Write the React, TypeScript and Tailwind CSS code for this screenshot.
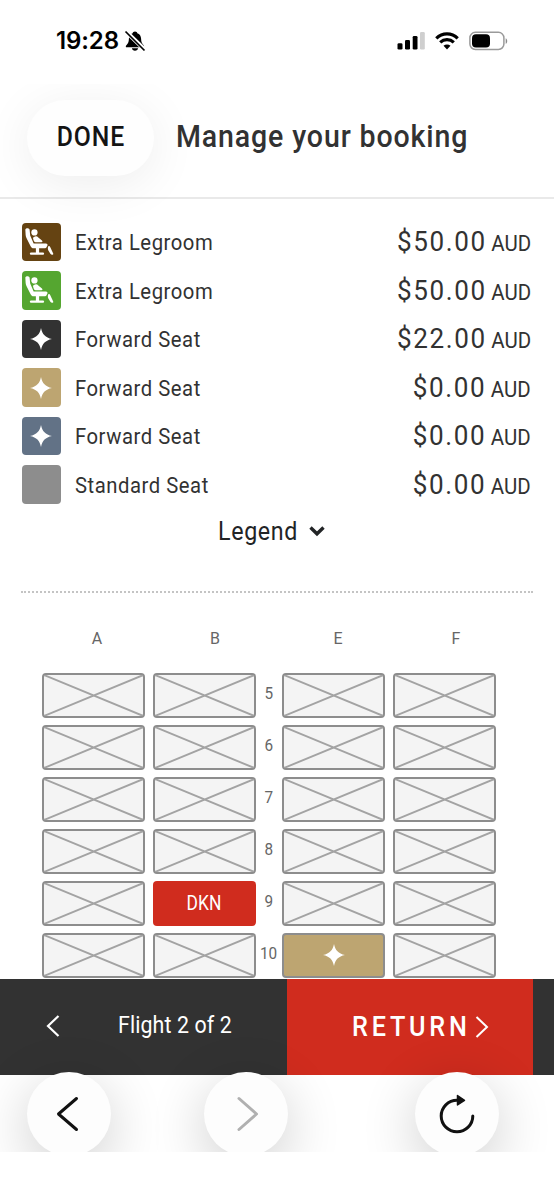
import clsx from 'clsx';
import { ReactNode } from 'react';

type FareIcon = 'legroom' | 'star' | 'none';

interface Fare {
  label: string;
  price: string;
  color: string;
  icon: FareIcon;
}

const FARES: Fare[] = [
  { label: 'Extra Legroom', price: '$50.00', color: 'bg-[#654312]', icon: 'legroom' },
  { label: 'Extra Legroom', price: '$50.00', color: 'bg-[#55a630]', icon: 'legroom' },
  { label: 'Forward Seat', price: '$22.00', color: 'bg-[#323232]', icon: 'star' },
  { label: 'Forward Seat', price: '$0.00', color: 'bg-[#bda571]', icon: 'star' },
  { label: 'Forward Seat', price: '$0.00', color: 'bg-[#627286]', icon: 'star' },
  { label: 'Standard Seat', price: '$0.00', color: 'bg-[#8d8d8d]', icon: 'none' },
];

const ROWS = [5, 6, 7, 8, 9, 10];

const ASSIGNED: Record<string, string> = { '9B': 'DKN' };
const AVAILABLE = ['10E'];

export default function App() {
  return (
    <div className="flex h-[1200px] w-[554px] flex-col overflow-hidden bg-white font-['Roboto',sans-serif] text-[#323232]">
      <StatusBar />
      <header className="flex h-[115px] shrink-0 items-center border-b-2 border-[#e9e9e9] pb-[5px] pl-[27px] [clip-path:inset(0_0_-70px_0)]">
        <button className="flex h-[76px] w-[127px] items-center justify-center rounded-full bg-[#fefefe] text-[27.5px] font-medium text-[#141414] shadow-[0_8px_50px_rgba(0,0,0,0.075)]">
          <span className="scale-x-[0.9] pb-[2px] tracking-[1px] whitespace-nowrap">DONE</span>
        </button>
        <h1 className="ml-[22px] origin-left scale-x-[0.92] pb-px text-[31px] font-medium tracking-[0.95px] whitespace-nowrap">
          Manage your booking
        </h1>
      </header>

      <main className="flex h-[780px] shrink-0 flex-col overflow-hidden pt-[24px]">
        <ul className="flex flex-col gap-[10.5px] pr-[23px] pl-[22px]">
          {FARES.map((fare, i) => (
            <FareRow key={i} fare={fare} />
          ))}
        </ul>

        <button className="mt-[11px] flex h-[34px] items-center pl-[218px] text-[25px] text-[#222426]">
          <span className="w-[80px] origin-left scale-x-[0.93] text-left tracking-[0.7px] whitespace-nowrap">
            Legend
          </span>
          <svg className="mb-[2px] ml-[11px] h-[12px] w-[16px]" viewBox="0 0 16 12" fill="none">
            <path d="M1.500 2.500 8 8.800l6.500-6.300" stroke="currentColor" strokeWidth="3.400" />
          </svg>
        </button>

        <div className="mx-[21px] mt-[42px] border-t-2 border-dotted border-[#c4c4c4]" />

        <SeatMap />
      </main>

      <footer className="flex h-24 shrink-0 bg-[#323232] pr-[21px] text-white">
        <div className="flex flex-1 items-center pb-[2px] pl-[46px]">
          <svg className="h-[24px] w-[14px]" viewBox="0 0 14 24" fill="none">
            <path d="M12.500 2 2 12l10.500 10" stroke="currentColor" strokeWidth="2.200" />
          </svg>
          <span className="ml-[58px] origin-left scale-x-[0.93] text-[23px] tracking-[0.1px] whitespace-nowrap">
            Flight 2 of 2
          </span>
        </div>
        <button className="flex w-[246px] items-center bg-[#d02c1e] pl-[65px]">
          <span className="w-[123px] origin-left scale-x-[0.9] text-left text-[28px] font-medium tracking-[4.2px] whitespace-nowrap">
            RETURN
          </span>
          <svg className="mb-px h-[24px] w-[14px]" viewBox="0 0 14 24" fill="none">
            <path d="m1.500 2 10.500 10L1.500 22" stroke="currentColor" strokeWidth="2" />
          </svg>
        </button>
      </footer>

      <nav className="-mt-[3px] flex h-[80px] shrink-0 pl-[27px] [clip-path:inset(-40px_0_0_0)]">
        <RoundButton className="text-[#111]">
          <path d="M49.500 26.500 31.500 42l18 15.500" />
        </RoundButton>
        <RoundButton className="ml-[93px] text-[#b0b0b0]">
          <path d="m35 26.500 17.500 15.500-17.500 15.500" />
        </RoundButton>
        <RoundButton className="ml-[127px] text-[#111]">
          <path d="M43 28.200h-1a15.800 15.800 0 1 0 15.800 15.800" />
          <path d="M42.500 23.500v9.500l7-4.700z" fill="currentColor" strokeWidth="1.500" />
        </RoundButton>
      </nav>
    </div>
  );
}

function StatusBar() {
  return (
    <div className="flex h-[84px] shrink-0 items-center pb-[2px] pl-[56px] text-black">
      <span className="w-[66px] font-['Inter',sans-serif] text-[24px] font-semibold tracking-[-0.100px]">
        19:28
      </span>
      <svg className="ml-[2px] h-[22px] w-[22px]" viewBox="0 0 22 22">
        <path
          fill="currentColor"
          d="M11 1.500c1.400 0 2.200.7 2.300 1.800 2.500.9 3.700 2.900 3.800 5.500.1 3.500.8 4.700 2.300 6.200.7.700.9 1.400.6 2.200H2c-.4-.8-.1-1.500.6-2.200 1.500-1.500 2.200-2.700 2.300-6.200.1-2.600 1.300-4.600 3.800-5.500.1-1.100.9-1.800 2.300-1.800zM7.900 18.300h6.200c-.2 1.600-1.400 2.500-3.100 2.500s-2.900-.9-3.100-2.500z"
        />
        <path d="M1.500 1 21 20" stroke="white" strokeWidth="4.200" />
        <path d="M1.500 1.500 20.500 20.500" stroke="currentColor" strokeWidth="1.700" />
      </svg>

      <svg className="ml-[251px] h-[20px] w-[28px]" viewBox="0 0 28 20" fill="currentColor">
        <rect x="0.500" y="12.200" width="5" height="6.300" rx="1.300" />
        <rect x="8" y="9" width="5" height="9.500" rx="1.300" />
        <rect x="15.700" y="5" width="4.800" height="13.500" rx="1.300" />
        <rect x="23" y="1" width="4.800" height="17.500" rx="1.300" fill="#cfcfcf" />
      </svg>
      <svg className="ml-[10px] h-[20px] w-[24px]" viewBox="0 0 24 20" fill="none">
        <g stroke="currentColor" strokeWidth="3.200">
          <path d="M1.300 7.300c6-6 15.400-6 21.400 0" />
          <path d="M5.200 11.400c3.900-3.600 9.700-3.600 13.600 0" />
        </g>
        <path d="M8.500 14.800c2-1.700 5-1.700 7 0L12 18.500z" fill="currentColor" />
      </svg>
      <svg className="ml-[10px] h-[20px] w-[40px]" viewBox="0 0 40 20">
        <rect x="0.900" y="1.300" width="34" height="17.200" rx="5.500" fill="none" stroke="#9a9a9a" strokeWidth="1.500" />
        <rect x="3" y="3.300" width="18" height="13.200" rx="4" fill="currentColor" />
        <path d="M36.700 7.200c2 .9 2 4.700 0 5.600z" fill="#8a8a8a" />
      </svg>
    </div>
  );
}

function FareRow({ fare }: { fare: Fare }) {
  return (
    <li className="flex h-[38px] items-center">
      <span
        className={clsx('flex size-[38.500px] items-center justify-center rounded-[4px] text-white', fare.color)}
      >
        {fare.icon === 'legroom' && <LegroomIcon />}
        {fare.icon === 'star' && <StarIcon />}
      </span>
      <span className="ml-[14px] origin-left scale-x-[0.9] pt-[2px] text-[22.500px] tracking-[0.600px] whitespace-nowrap">
        {fare.label}
      </span>
      <span className="ml-auto flex origin-right scale-x-[0.93] items-baseline gap-[5px] text-[28px] whitespace-nowrap">
        <span className="tracking-[1.700px]">{fare.price}</span>
        <span className="text-[22px]">AUD</span>
      </span>
    </li>
  );
}

function SeatMap() {
  return (
    <section className="pl-[42px] text-[#666]">
      <div className="mt-[34px] flex h-6 text-[16px] leading-6">
        <span className="w-[110px] text-center">A</span>
        <span className="ml-[8px] w-[110px] text-center">B</span>
        <span className="ml-[13px] w-[110px] text-center">E</span>
        <span className="ml-[8px] w-[110px] text-center">F</span>
      </div>
      <div className="mt-[22px] flex flex-col gap-[7px]">
        {ROWS.map((row) => (
          <div key={row} className="flex h-[45px]">
            <Seat id={`${row}A`} />
            <Seat id={`${row}B`} className="ml-[7.400px]" />
            <span className="w-[26px] pt-[8px] text-center text-[17px] leading-6">
              <span className="inline-block scale-x-[0.9]">{row}</span>
            </span>
            <Seat id={`${row}E`} />
            <Seat id={`${row}F`} className="ml-[7.400px]" />
          </div>
        ))}
      </div>
    </section>
  );
}

function Seat({ id, className }: { id: string; className?: string }) {
  const base = 'flex h-[45px] w-[103.300px] shrink-0 items-center justify-center rounded-[4px]';
  const passenger = ASSIGNED[id];

  if (passenger) {
    return (
      <button className={clsx(base, 'bg-[#d02c1e] text-[20px] text-white', className)}>
        <span className="scale-x-[0.87]">{passenger}</span>
      </button>
    );
  }

  if (AVAILABLE.includes(id)) {
    return (
      <button className={clsx(base, 'border-2 border-[#8d8d8d] bg-[#bda571] text-white', className)}>
        <StarIcon />
      </button>
    );
  }

  return (
    <div className={clsx(base, 'border-2 border-[#8d8d8d] bg-[#f4f4f4]', className)}>
      <svg className="size-full" viewBox="0 0 100 41" preserveAspectRatio="none">
        <path d="M0 0 100 41M100 0 0 41" stroke="#a3a3a3" strokeWidth="1.900" />
      </svg>
    </div>
  );
}

function RoundButton({ className, children }: { className?: string; children: ReactNode }) {
  return (
    <button
      className={clsx(
        'size-[84px] shrink-0 rounded-full bg-[#fdfdfd] shadow-[0_14px_56px_rgba(0,0,0,0.2)]',
        className,
      )}
    >
      <svg
        className="size-full"
        viewBox="0 0 84 84"
        fill="none"
        stroke="currentColor"
        strokeWidth="3"
        strokeLinecap="round"
        strokeLinejoin="round"
      >
        {children}
      </svg>
    </button>
  );
}

function StarIcon() {
  return (
    <svg className="size-[22px]" viewBox="0 0 22 22" fill="currentColor">
      <path d="M11 0c1.300 6.400 4.400 9.600 11 11-6.600 1.400-9.700 4.600-11 11C9.700 15.600 6.600 12.400 0 11 6.600 9.600 9.700 6.400 11 0z" />
    </svg>
  );
}

function LegroomIcon() {
  return (
    <svg className="size-full" viewBox="0 0 38 38" fill="currentColor">
      <circle cx="12.300" cy="9.300" r="3.100" />
      <path d="M3.300 6.700c0-2 3.900-2 4.200 0l.6 5.600 3.400 7.900h12c1.500 0 2 1 1.600 2l-.8 1.500c-.5 1-1 1.300-2.200 1.300H11.500c-1.500 0-2.400-.7-3-2L4.400 14.800c-.5-1-.7-2-.8-3z" />
      <path d="M11.800 13.700c1.800-1 3.200-.7 4.300.5l3.600 3.100c1 1 .4 1.600-.5 1.600h-5.800c-1 0-1.500-.4-1.800-1.300l-.6-2.100c-.2-.8 0-1.400.8-1.800z" />
      <path d="M13.700 24.500h3.200v4.600h3.700c1.700 0 1.700 2.300 0 2.300H9c-1.700 0-1.700-2.300 0-2.300h4.700z" />
      <path d="M25.600 24c.3-1.500 1.600-1.700 2.200-.4l3 6.400c.6 1.500-1.700 2-2.600.7l-2.200-3.600c-.5-.9-.6-1.900-.4-3.100z" />
    </svg>
  );
}
